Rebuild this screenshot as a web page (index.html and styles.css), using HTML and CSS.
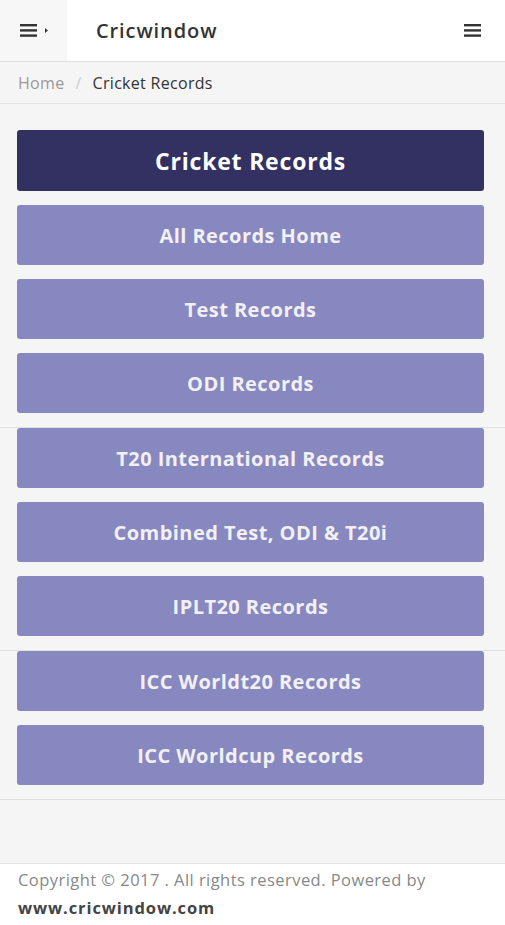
FILE: index.html
```html
<!DOCTYPE html>
<html lang="en">
<head>
    <meta charset="UTF-8">
    <meta name="viewport" content="width=device-width, initial-scale=1.0">
    <title>Cricket Records - Cricwindow</title>
    <link rel="stylesheet" href="styles.css">
</head>
<body>
    <header class="topbar">
        <div class="side-toggle">
            <svg width="30" height="14" viewBox="0 0 30 14">
                <rect x="0" y="0" width="17" height="2.4" fill="#333"/>
                <rect x="0" y="5.2" width="17" height="2.4" fill="#333"/>
                <rect x="0" y="10.4" width="17" height="2.4" fill="#333"/>
                <polygon points="25,4 28,6.5 25,9" fill="#333"/>
            </svg>
        </div>
        <div class="brand">Cricwindow</div>
        <div class="menu-toggle">
            <svg width="17" height="13" viewBox="0 0 17 13">
                <rect x="0" y="0" width="17" height="2.4" fill="#333"/>
                <rect x="0" y="5.2" width="17" height="2.4" fill="#333"/>
                <rect x="0" y="10.4" width="17" height="2.4" fill="#333"/>
            </svg>
        </div>
    </header>

    <nav class="breadcrumb">
        <a href="#">Home</a>
        <span class="sep">/</span>
        <span class="current">Cricket Records</span>
    </nav>

    <main class="records">
        <div class="row first">
            <div class="title-box">Cricket Records</div>
            <a class="rec-btn" href="#">All Records Home</a>
            <a class="rec-btn" href="#">Test Records</a>
            <a class="rec-btn" href="#">ODI Records</a>
        </div>
        <div class="row">
            <a class="rec-btn" href="#">T20 International Records</a>
            <a class="rec-btn" href="#">Combined Test, ODI &amp; T20i</a>
            <a class="rec-btn" href="#">IPLT20 Records</a>
        </div>
        <div class="row">
            <a class="rec-btn" href="#">ICC Worldt20 Records</a>
            <a class="rec-btn" href="#">ICC Worldcup Records</a>
        </div>
    </main>

    <footer class="footer">
        <p>Copyright &copy; 2017 . All rights reserved. Powered by <a href="#">www.cricwindow.com</a></p>
    </footer>
</body>
</html>
```

FILE: styles.css
```css
body { margin: 0; background: #f5f5f5; font-family: "Open Sans", "Noto Sans", sans-serif; color: #333; }
a { text-decoration: none; }

.topbar { display: flex; align-items: center; height: 61px; background: #fff; border-bottom: 1px solid #dedede; }
.side-toggle { width: 67px; height: 61px; background: #f7f7f7; display: flex; align-items: center; padding-left: 20px; box-sizing: border-box; }
.brand { flex: 1; padding-left: 29px; font-size: 20px; font-weight: 600; color: #333; letter-spacing: 0.9px; }
.menu-toggle { padding-right: 24px; display: flex; align-items: center; }

.breadcrumb { height: 41px; display: flex; align-items: center; padding: 0 18px; font-size: 16px; letter-spacing: 0.3px; border-bottom: 1px solid #e3e3e3; background: #f5f5f5; }
.breadcrumb a { color: #999; }
.breadcrumb .sep { color: #ccc; padding: 0 11px; }
.breadcrumb .current { color: #333; }

.records { margin-bottom: 63px; }
.row { display: flex; flex-direction: column; gap: 14px; padding: 0 21px 14px 17px; border-bottom: 1px solid #e0e0e0; }
.row.first { padding-top: 26px; }
.title-box { height: 61px; display: flex; align-items: center; justify-content: center; background: #333062; color: #fff; font-size: 23px; font-weight: 700; letter-spacing: 0.8px; border-radius: 3px; }
.rec-btn { height: 60px; box-sizing: border-box; padding-top: 1px; display: flex; align-items: center; justify-content: center; background: #8788bf; color: #f2f0f4; font-size: 20px; font-weight: 700; letter-spacing: 0.45px; border-radius: 3px; }

.footer { background: #fff; border-top: 1px solid #e3e3e3; padding: 0 18px 10px; }
.footer p { margin: 0; padding-top: 2px; font-size: 16.5px; line-height: 28px; color: #888; letter-spacing: 0.45px; }
.footer a { color: #444; font-weight: 700; letter-spacing: 0.9px; }
```
